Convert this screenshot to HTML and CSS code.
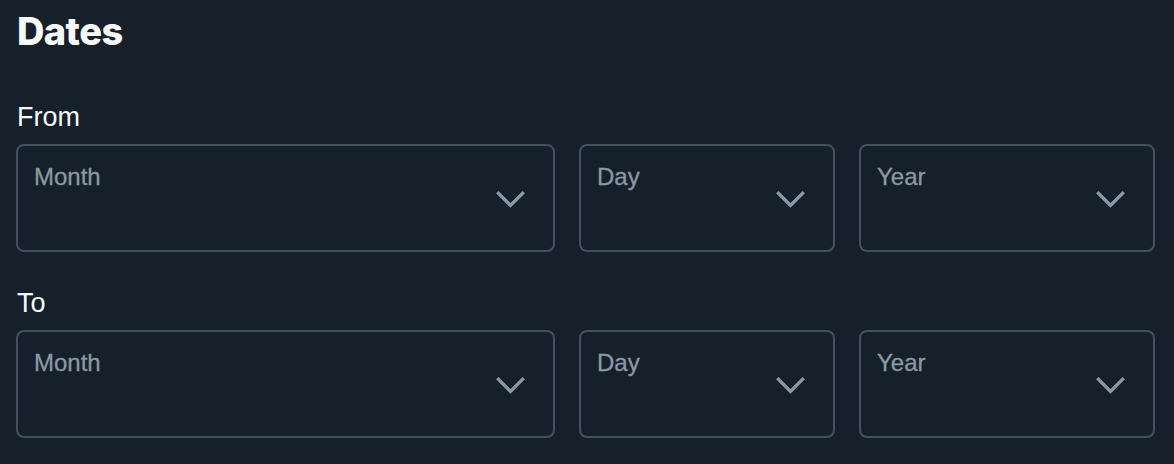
FILE: index.html
```html
<!DOCTYPE html>
<html lang="en">
<head>
<meta charset="utf-8">
<title>Dates</title>
<link rel="stylesheet" href="styles.css">
</head>
<body>
<main class="dates">
  <h1 class="title">Dates</h1>

  <section class="range">
    <div class="label">From</div>
    <div class="row">
      <div class="select"><span class="ph">Month</span><svg class="chev" viewBox="0 0 24 24"><path d="M3.543 8.96l1.414-1.42L12 14.59l7.043-7.05 1.414 1.42L12 17.41 3.543 8.96z"/></svg></div>
      <div class="select"><span class="ph">Day</span><svg class="chev" viewBox="0 0 24 24"><path d="M3.543 8.96l1.414-1.42L12 14.59l7.043-7.05 1.414 1.42L12 17.41 3.543 8.96z"/></svg></div>
      <div class="select"><span class="ph">Year</span><svg class="chev" viewBox="0 0 24 24"><path d="M3.543 8.96l1.414-1.42L12 14.59l7.043-7.05 1.414 1.42L12 17.41 3.543 8.96z"/></svg></div>
    </div>
  </section>

  <section class="range">
    <div class="label">To</div>
    <div class="row">
      <div class="select"><span class="ph">Month</span><svg class="chev" viewBox="0 0 24 24"><path d="M3.543 8.96l1.414-1.42L12 14.59l7.043-7.05 1.414 1.42L12 17.41 3.543 8.96z"/></svg></div>
      <div class="select"><span class="ph">Day</span><svg class="chev" viewBox="0 0 24 24"><path d="M3.543 8.96l1.414-1.42L12 14.59l7.043-7.05 1.414 1.42L12 17.41 3.543 8.96z"/></svg></div>
      <div class="select"><span class="ph">Year</span><svg class="chev" viewBox="0 0 24 24"><path d="M3.543 8.96l1.414-1.42L12 14.59l7.043-7.05 1.414 1.42L12 17.41 3.543 8.96z"/></svg></div>
    </div>
  </section>
</main>
</body>
</html>
```

FILE: styles.css
```css
html, body {
  margin: 0;
  padding: 0;
  background: #15202b;
}

body {
  font-family: "Liberation Sans", Arial, sans-serif;
  color: #f7f9f9;
  width: 1174px;
  height: 464px;
  overflow: hidden;
}

.dates {
  padding: 7px 19px 0 16px;
}

.title {
  margin: 0 0 44px 1px;
  font-family: Inter, "Liberation Sans", Arial, sans-serif;
  font-size: 38px;
  line-height: 48px;
  font-weight: 800;
  letter-spacing: -0.6px;
}

.range + .range {
  margin-top: 33px;
}

.label {
  font-size: 27px;
  line-height: 36px;
  margin: 0 0 9px 1px;
}

.row {
  display: grid;
  grid-template-columns: 539fr 256fr 296fr;
  column-gap: 24px;
}

.select {
  box-sizing: border-box;
  height: 108px;
  border: 2px solid #435061;
  border-radius: 8px;
  padding: 15px 22px 0 16px;
  display: flex;
  justify-content: space-between;
}

.ph {
  font-size: 24px;
  line-height: 32px;
  color: #8b98a5;
  -webkit-text-stroke: 0.3px #8b98a5;
}

.chev {
  width: 41px;
  height: 41px;
  fill: #8b98a5;
  align-self: center;
  margin-top: -14px;
}
```
